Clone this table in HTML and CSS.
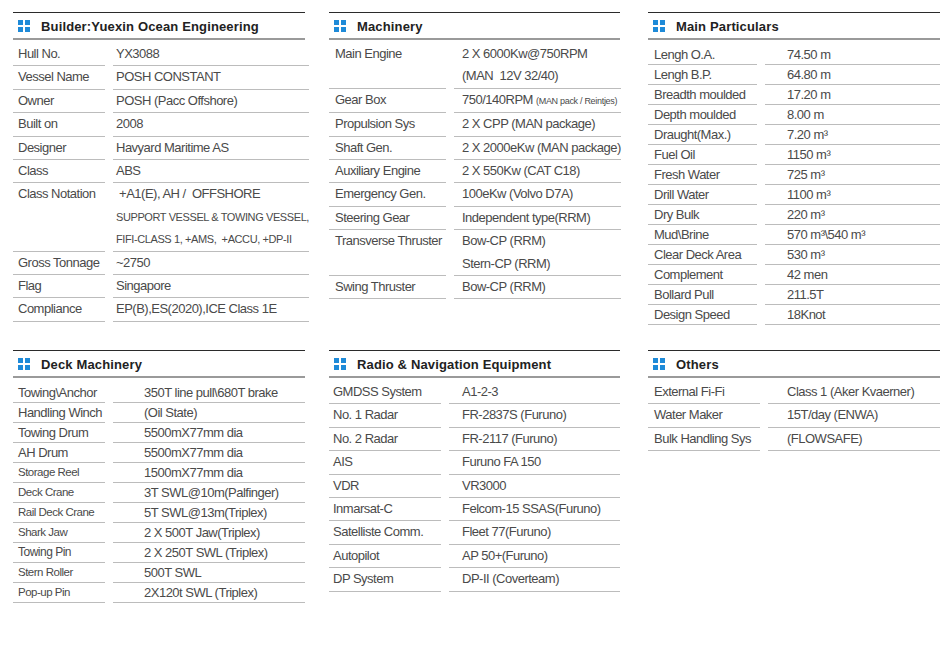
FILE: index.html
```html
<!DOCTYPE html>
<html lang="en">
<head>
<meta charset="utf-8">
<title>Vessel Specification</title>
<link rel="stylesheet" href="styles.css">
</head>
<body>
<div class="page">

  <section class="panel w292 p-builder">
    <h2 class="panel-head"><span class="icon"><i></i><i></i><i></i><i></i></span>Builder:Yuexin Ocean Engineering</h2>
    <div class="spec normal">
      <div class="k">Hull No.</div><div class="v">YX3088</div>
      <div class="k">Vessel Name</div><div class="v">POSH CONSTANT</div>
      <div class="k">Owner</div><div class="v">POSH (Pacc Offshore)</div>
      <div class="k">Built on</div><div class="v">2008</div>
      <div class="k">Designer</div><div class="v">Havyard Maritime AS</div>
      <div class="k">Class</div><div class="v">ABS</div>
      <div class="k">Class Notation</div>
      <div class="v"><span class="pre"> +A1(E), AH /  OFFSHORE</span><br><span class="tiny">SUPPORT VESSEL &amp; TOWING VESSEL,</span><br><span class="tiny pre">FIFI-CLASS 1, +AMS,  +ACCU, +DP-II</span></div>
      <div class="k">Gross Tonnage</div><div class="v">~2750</div>
      <div class="k">Flag</div><div class="v">Singapore</div>
      <div class="k">Compliance</div><div class="v">EP(B),ES(2020),ICE Class 1E</div>
    </div>
  </section>

  <section class="panel w291 p-mach">
    <h2 class="panel-head"><span class="icon"><i></i><i></i><i></i><i></i></span>Machinery</h2>
    <div class="spec normal">
      <div class="k">Main Engine</div><div class="v">2 X 6000Kw@750RPM<br><span class="pre">(MAN  12V 32/40)</span></div>
      <div class="k">Gear Box</div><div class="v">750/140RPM <span class="micro">(MAN pack / Reintjes)</span></div>
      <div class="k">Propulsion Sys</div><div class="v">2 X CPP (MAN package)</div>
      <div class="k">Shaft Gen.</div><div class="v">2 X 2000eKw (MAN package)</div>
      <div class="k">Auxiliary Engine</div><div class="v">2 X 550Kw (CAT C18)</div>
      <div class="k">Emergency Gen.</div><div class="v">100eKw (Volvo D7A)</div>
      <div class="k">Steering Gear</div><div class="v">Independent type(RRM)</div>
      <div class="k">Transverse Thruster</div><div class="v">Bow-CP (RRM)<br>Stern-CP (RRM)</div>
      <div class="k">Swing Thruster</div><div class="v">Bow-CP (RRM)</div>
    </div>
  </section>

  <section class="panel w292 p-main">
    <h2 class="panel-head"><span class="icon"><i></i><i></i><i></i><i></i></span>Main Particulars</h2>
    <div class="spec compact">
      <div class="k">Lengh O.A.</div><div class="v">74.50 m</div>
      <div class="k">Lengh B.P.</div><div class="v">64.80 m</div>
      <div class="k">Breadth moulded</div><div class="v">17.20 m</div>
      <div class="k">Depth moulded</div><div class="v">8.00 m</div>
      <div class="k">Draught(Max.)</div><div class="v">7.20 m³</div>
      <div class="k">Fuel Oil</div><div class="v">1150 m³</div>
      <div class="k">Fresh Water</div><div class="v">725 m³</div>
      <div class="k">Drill Water</div><div class="v">1100 m³</div>
      <div class="k">Dry Bulk</div><div class="v">220 m³</div>
      <div class="k">Mud\Brine</div><div class="v">570 m³\540 m³</div>
      <div class="k">Clear Deck Area</div><div class="v">530 m³</div>
      <div class="k">Complement</div><div class="v">42 men</div>
      <div class="k">Bollard Pull</div><div class="v">211.5T</div>
      <div class="k">Design Speed</div><div class="v">18Knot</div>
    </div>
  </section>

  <section class="panel w292 p-deck">
    <h2 class="panel-head"><span class="icon"><i></i><i></i><i></i><i></i></span>Deck Machinery</h2>
    <div class="spec compact">
      <div class="k">Towing\Anchor</div><div class="v">350T line pull\680T brake</div>
      <div class="k">Handling Winch</div><div class="v">(Oil State)</div>
      <div class="k">Towing Drum</div><div class="v">5500mX77mm dia</div>
      <div class="k">AH Drum</div><div class="v">5500mX77mm dia</div>
      <div class="k sm">Storage Reel</div><div class="v">1500mX77mm dia</div>
      <div class="k sm">Deck Crane</div><div class="v">3T SWL@10m(Palfinger)</div>
      <div class="k sm">Rail Deck Crane</div><div class="v">5T SWL@13m(Triplex)</div>
      <div class="k sm">Shark Jaw</div><div class="v">2 X 500T Jaw(Triplex)</div>
      <div class="k md">Towing Pin</div><div class="v">2 X 250T SWL (Triplex)</div>
      <div class="k sm">Stern Roller</div><div class="v">500T SWL</div>
      <div class="k sm">Pop-up Pin</div><div class="v">2X120t SWL (Triplex)</div>
    </div>
  </section>

  <section class="panel w291 p-radio">
    <h2 class="panel-head"><span class="icon"><i></i><i></i><i></i><i></i></span>Radio &amp; Navigation Equipment</h2>
    <div class="spec normal">
      <div class="k">GMDSS System</div><div class="v">A1-2-3</div>
      <div class="k">No. 1 Radar</div><div class="v">FR-2837S (Furuno)</div>
      <div class="k">No. 2 Radar</div><div class="v">FR-2117 (Furuno)</div>
      <div class="k">AIS</div><div class="v">Furuno FA 150</div>
      <div class="k">VDR</div><div class="v">VR3000</div>
      <div class="k">Inmarsat-C</div><div class="v">Felcom-15 SSAS(Furuno)</div>
      <div class="k">Satelliste Comm.</div><div class="v">Fleet 77(Furuno)</div>
      <div class="k">Autopilot</div><div class="v">AP 50+(Furuno)</div>
      <div class="k">DP System</div><div class="v">DP-II (Coverteam)</div>
    </div>
  </section>

  <section class="panel w292 p-others">
    <h2 class="panel-head"><span class="icon"><i></i><i></i><i></i><i></i></span>Others</h2>
    <div class="spec normal">
      <div class="k">External Fi-Fi</div><div class="v">Class 1 (Aker Kvaerner)</div>
      <div class="k">Water Maker</div><div class="v">15T/day (ENWA)</div>
      <div class="k">Bulk Handling Sys</div><div class="v">(FLOWSAFE)</div>
    </div>
  </section>

</div>
</body>
</html>
```

FILE: styles.css
```css
* { box-sizing: border-box; }

html, body {
  margin: 0;
  padding: 0;
  background: #ffffff;
}

body {
  font-family: "Liberation Sans", Arial, sans-serif;
  color: #4a4a4a;
}

.page {
  display: grid;
  grid-template-columns: 316px 319px 292px;
  grid-template-rows: 338px auto;
  padding: 12px 0 0 13px;
}

.panel {
  justify-self: start;
  align-self: start;
  border-top: 1px solid #2b2b2b;
}

.w292 { width: 292px; }
.w291 { width: 291px; }

.panel-head {
  display: flex;
  align-items: center;
  height: 27px;
  margin: 0;
  padding-left: 5px;
  padding-top: 1px;
  border-bottom: 2px solid #9a9a9a;
  font-size: 13px;
  font-weight: bold;
  letter-spacing: 0.15px;
  color: #222222;
}

.icon {
  display: grid;
  grid-template-columns: 5px 5px;
  grid-template-rows: 5px 5px;
  gap: 2px;
  margin-right: 11px;
}

.icon i {
  display: block;
  background: #1e8ad8;
}

.spec {
  display: grid;
  grid-template-columns: var(--kw) 1fr;
  column-gap: 8px;
  font-size: 13px;
  letter-spacing: -0.5px;
}

.spec .k,
.spec .v {
  border-bottom: 1px solid #bcbcbc;
  white-space: nowrap;
}

.spec .k { padding-left: var(--kp); }
.spec .v { padding-left: var(--vp); }

.normal {
  margin-top: 3px;
  line-height: 22.4px;
}

.compact {
  margin-top: 5px;
  line-height: 19px;
}

.pre { white-space: pre; }

.tiny {
  font-size: 11px;
  letter-spacing: -0.4px;
}

.micro {
  font-size: 9px;
  letter-spacing: -0.3px;
}

.sm { font-size: 11.5px; }
.md { font-size: 12px; }

.p-builder { --kw: 92px; --kp: 5px; --vp: 3px; }
.p-mach { --kw: 117px; --kp: 6px; --vp: 8px; }
.p-main { --kw: 109px; --kp: 6px; --vp: 22px; }
.p-deck { --kw: 92px; --kp: 5px; --vp: 31px; }
.p-radio { --kw: 112px; --kp: 4px; --vp: 13px; }
.p-others { --kw: 112px; --kp: 6px; --vp: 19px; }
```
